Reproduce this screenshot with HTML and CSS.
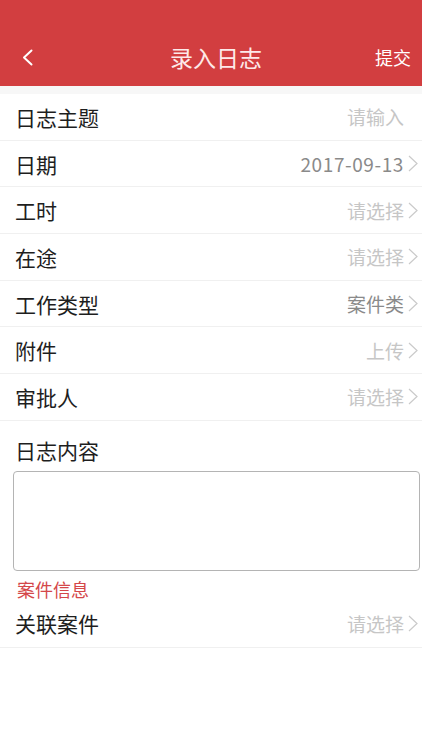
FILE: index.html
```html
<!DOCTYPE html>
<html lang="zh-CN">
<head>
    <meta charset="UTF-8">
    <meta name="viewport" content="width=device-width, initial-scale=1.0">
    <title>录入日志</title>
    <link rel="stylesheet" href="styles.css">
</head>
<body>
    <header class="nav">
        <div class="nav-bar">
            <span class="nav-back">
                <svg width="13" height="17" viewBox="0 0 13 17"><path d="M10.5 1.5 L3 8.5 L10.5 15.5" fill="none" stroke="#fff" stroke-width="2" stroke-linecap="round" stroke-linejoin="round"/></svg>
            </span>
            <h1 class="nav-title">录入日志</h1>
            <span class="nav-action">提交</span>
        </div>
    </header>

    <main class="form">
        <div class="row">
            <span class="label">日志主题</span>
            <span class="value placeholder">请输入</span>
            <span class="arrow hidden"></span>
        </div>
        <div class="row">
            <span class="label">日期</span>
            <span class="value filled date">2017-09-13</span>
            <span class="arrow"></span>
        </div>
        <div class="row">
            <span class="label">工时</span>
            <span class="value placeholder">请选择</span>
            <span class="arrow"></span>
        </div>
        <div class="row">
            <span class="label">在途</span>
            <span class="value placeholder">请选择</span>
            <span class="arrow"></span>
        </div>
        <div class="row">
            <span class="label">工作类型</span>
            <span class="value filled">案件类</span>
            <span class="arrow"></span>
        </div>
        <div class="row">
            <span class="label">附件</span>
            <span class="value placeholder">上传</span>
            <span class="arrow"></span>
        </div>
        <div class="row">
            <span class="label">审批人</span>
            <span class="value placeholder">请选择</span>
            <span class="arrow"></span>
        </div>

        <div class="content">
            <div class="label">日志内容</div>
            <textarea class="content-box"></textarea>
        </div>

        <div class="section-title">案件信息</div>
        <div class="row row-last">
            <span class="label">关联案件</span>
            <span class="value placeholder">请选择</span>
            <span class="arrow"></span>
        </div>
    </main>
</body>
</html>
```

FILE: styles.css
```css
:root {
    --red: #d23e40;
    --line: #f0f0f0;
    --text: #1e1e1e;
}

body {
    margin: 0;
    padding: 0;
    background-color: #fff;
    font-family: "Noto Sans CJK SC", "Noto Sans", sans-serif;
    color: var(--text);
}

.nav {
    background-color: var(--red);
    height: 86px;
    padding-top: 28px;
    box-sizing: border-box;
}

.nav-bar {
    height: 58px;
    display: grid;
    grid-template-columns: 1fr auto 1fr;
    align-items: center;
    padding: 0 11px 0 21px;
}

.nav-back {
    display: flex;
}

.nav-title {
    margin: 0;
    font-size: 23px;
    line-height: 30px;
    font-weight: normal;
    color: #fde9e9;
}

.nav-action {
    justify-self: end;
    font-size: 18px;
    color: #fff;
}

.form {
    border-top: 8px solid #f7f7f7;
}

.row {
    height: 46.7px;
    box-sizing: border-box;
    display: flex;
    align-items: center;
    padding: 0 4px 0 15px;
    border-bottom: 1px solid var(--line);
}

.label {
    flex: 1;
    font-size: 21px;
    line-height: 26px;
}

.value {
    font-size: 19px;
}

.date {
    letter-spacing: 0.6px;
}

.placeholder {
    color: #c6c6c6;
}

.filled {
    color: #8a8a8a;
}

.arrow {
    width: 10px;
    height: 17px;
    margin-left: 4px;
    background: no-repeat center / contain url("data:image/svg+xml,%3Csvg xmlns='http://www.w3.org/2000/svg' viewBox='0 0 10 17'%3E%3Cpath d='M1 1 L9 8.5 L1 16' fill='none' stroke='%23cacaca' stroke-width='1.2'/%3E%3C/svg%3E");
}

.arrow.hidden {
    visibility: hidden;
}

.content {
    padding: 16px 2px 0 13px;
}

.content .label {
    padding-left: 2px;
}

.content-box {
    display: block;
    width: 100%;
    height: 100px;
    margin-top: 8px;
    box-sizing: border-box;
    border: 1px solid #b4b4b4;
    border-radius: 4px;
    resize: none;
    outline: none;
}

.section-title {
    padding: 5px 0 0 17px;
    font-size: 18px;
    line-height: 26px;
    color: #d4474a;
}

.row-last {
    height: 46px;
    padding-bottom: 2px;
}
```
